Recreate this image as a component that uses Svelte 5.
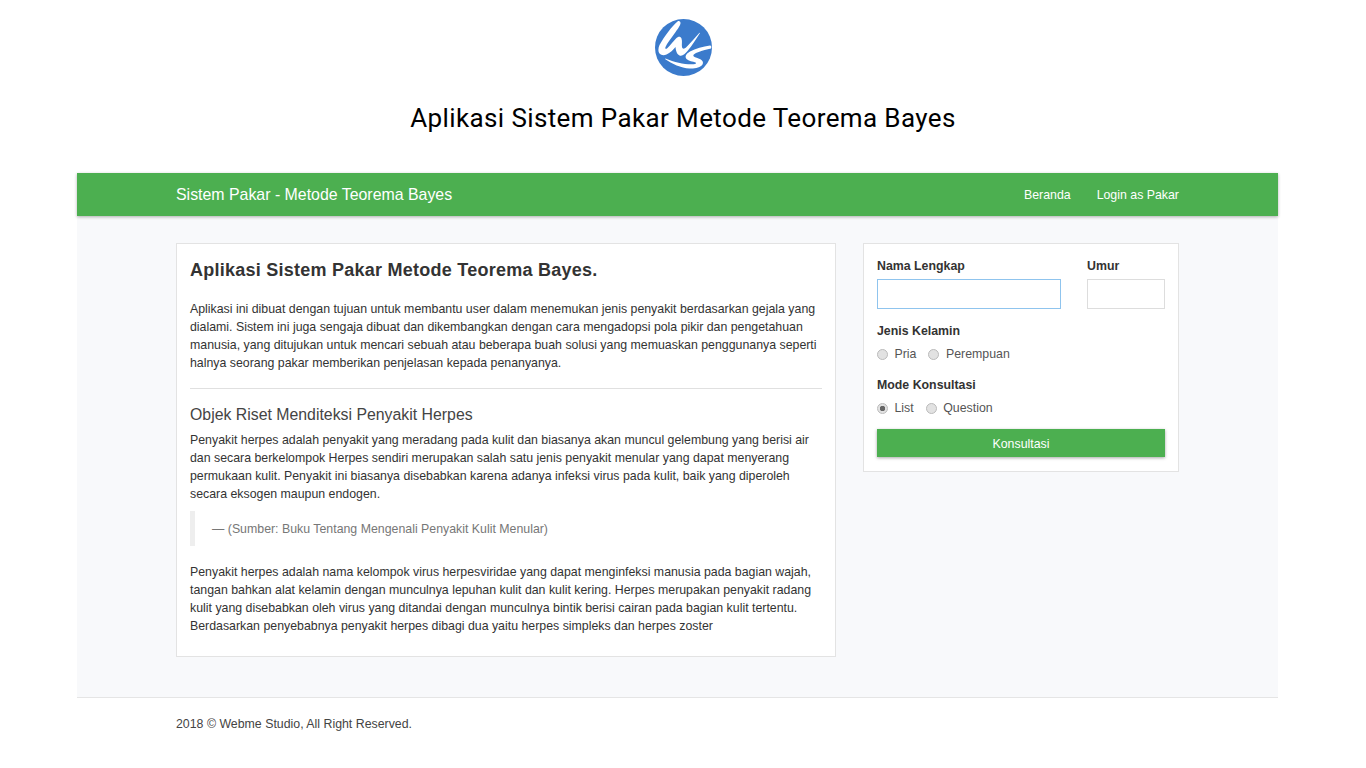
<script>
  let nama = $state('');
  let umur = $state('');
  let kelamin = $state('');
  let mode = $state('list');
</script>

<header class="brand">
  <svg class="logo" viewBox="0 0 57 57" aria-hidden="true">
    <circle cx="28.5" cy="28.5" r="28.5" fill="#3b7bcc" />
    <!-- W of the signature -->
    <path
      fill="#fff"
      d="M22.500 2.500C17 7 9 18 4.500 26C3 29.500 3 33 4.500 34.500C6.500 36.500 9 36.500 11.500 35.500C15 34 18.500 30.500 20.500 28C20.800 31 21.500 35 24.500 36.500C27.500 37.500 30 35 32.500 32C37.500 26 41.500 19.500 45 14L44.500 13.700C40 18.500 35.500 24 31.500 28C29.500 30 27.500 30.500 27 28C26.500 25.500 27.500 22.500 26.500 19.500C25.500 17 23 17.500 21 19.500C18 22.500 15 26.500 12.500 29C11 30.500 9.800 30 10.500 28C12 24 16 19.500 19.500 14.500C22 11 25 7 25.500 4.500C25.800 2.500 24 1.500 22.500 2.500Z"
    />
    <!-- S with its long tail -->
    <path
      fill="#fff"
      d="M55 26.500C48 27.500 40.500 29.500 35 32.500C31 34.800 29.500 37.500 31.500 40C33.500 42 38 42.500 40.500 43.500C41.800 44.300 41 45 38.500 45.200C31 45.800 20 43.500 10.500 39.500L10 40C17 45 26 49 34.500 49.500C40 49.800 45.500 48.500 47.500 45.500C49 43 47 40.500 43.500 39.500C41 38.500 38.500 38 38.300 36.800C38.200 35.500 40 34.500 43 33.300C47.500 31.500 52 30.500 56 29.500C56.800 28 56.300 26.500 55 26.500Z"
    />
  </svg>
  <h1>Aplikasi Sistem Pakar Metode Teorema Bayes</h1>
</header>

<div class="shell">
  <nav class="navbar">
    <div class="container navbar__inner">
      <a class="navbar__brand" href="#top">Sistem Pakar - Metode Teorema Bayes</a>
      <div class="navbar__links">
        <a href="#top">Beranda</a>
        <a href="#top">Login as Pakar</a>
      </div>
    </div>
  </nav>

  <main class="body">
    <div class="container columns">
      <article class="card article">
        <h2>Aplikasi Sistem Pakar Metode Teorema Bayes.</h2>
        <p>
          Aplikasi ini dibuat dengan tujuan untuk membantu user dalam menemukan jenis penyakit berdasarkan gejala yang
          dialami. Sistem ini juga sengaja dibuat dan dikembangkan dengan cara mengadopsi pola pikir dan pengetahuan
          manusia, yang ditujukan untuk mencari sebuah atau beberapa buah solusi yang memuaskan penggunanya seperti
          halnya seorang pakar memberikan penjelasan kepada penanyanya.
        </p>
        <hr />
        <h3>Objek Riset Menditeksi Penyakit Herpes</h3>
        <p>
          Penyakit herpes adalah penyakit yang meradang pada kulit dan biasanya akan muncul gelembung yang berisi air
          dan secara berkelompok Herpes sendiri merupakan salah satu jenis penyakit menular yang dapat menyerang
          permukaan kulit. Penyakit ini biasanya disebabkan karena adanya infeksi virus pada kulit, baik yang diperoleh
          secara eksogen maupun endogen.
        </p>
        <blockquote>— (Sumber: Buku Tentang Mengenali Penyakit Kulit Menular)</blockquote>
        <p>
          Penyakit herpes adalah nama kelompok virus herpesviridae yang dapat menginfeksi manusia pada bagian wajah,
          tangan bahkan alat kelamin dengan munculnya lepuhan kulit dan kulit kering. Herpes merupakan penyakit radang
          kulit yang disebabkan oleh virus yang ditandai dengan munculnya bintik berisi cairan pada bagian kulit tertentu.
          Berdasarkan penyebabnya penyakit herpes dibagi dua yaitu herpes simpleks dan herpes zoster
        </p>
      </article>

      <form class="card form" onsubmit={(e) => e.preventDefault()}>
        <div class="form__row">
          <label class="field field--name">
            <span class="label">Nama Lengkap</span>
            <input class="input input--focus" type="text" bind:value={nama} />
          </label>
          <label class="field field--age">
            <span class="label">Umur</span>
            <input class="input" type="text" bind:value={umur} />
          </label>
        </div>

        <div class="group">
          <span class="label">Jenis Kelamin</span>
          <div class="radios">
            <label><input type="radio" bind:group={kelamin} value="pria" />Pria</label>
            <label><input type="radio" bind:group={kelamin} value="perempuan" />Perempuan</label>
          </div>
        </div>

        <div class="group">
          <span class="label">Mode Konsultasi</span>
          <div class="radios">
            <label><input type="radio" bind:group={mode} value="list" />List</label>
            <label><input type="radio" bind:group={mode} value="question" />Question</label>
          </div>
        </div>

        <button type="submit">Konsultasi</button>
      </form>
    </div>
  </main>

  <footer class="footer">
    <div class="container">2018 © Webme Studio, All Right Reserved.</div>
  </footer>
</div>

<style>
  :global(body) {
    background: #fff;
    font-family: "Liberation Sans", Arial, sans-serif;
    font-size: 12.35px;
    line-height: 18px;
    color: #333;
  }

  .brand {
    display: flex;
    flex-direction: column;
    align-items: center;
    padding-top: 19px;
    height: 173px;
    box-sizing: border-box;
  }
  .logo {
    width: 57px;
    height: 57px;
    display: block;
  }
  .brand h1 {
    margin: 26px 0 0;
    font-family: Roboto, sans-serif;
    font-size: 26px;
    letter-spacing: 0.38px;
    line-height: 32px;
    font-weight: 400;
    color: #000;
  }

  .shell {
    width: 1201px;
    margin-left: 77px;
  }
  .container {
    width: 1003px;
    margin: 0 auto;
  }

  .navbar {
    height: 43px;
    background: #4caf50;
    box-shadow: 0 1px 3px rgba(0, 0, 0, 0.3);
    position: relative;
  }
  .navbar__inner {
    height: 100%;
    display: flex;
    align-items: center;
    justify-content: space-between;
  }
  .navbar a {
    color: #fff;
    text-decoration: none;
  }
  .navbar__brand {
    font-size: 15.9px;
  }
  .navbar__links {
    display: flex;
    gap: 26px;
  }

  .body {
    background: #f8f9fb;
    height: 482px;
    padding-top: 27px;
    box-sizing: border-box;
    border-bottom: 1px solid #e5e5e5;
  }
  .columns {
    display: flex;
    align-items: flex-start;
    justify-content: space-between;
  }
  .card {
    background: #fff;
    border: 1px solid #e3e3e3;
    box-sizing: border-box;
  }

  .article {
    width: 660px;
    height: 414px;
    padding: 14px 13px 0;
  }
  .article h2 {
    margin: 0 0 17px;
    font-size: 18px;
    line-height: 25px;
    font-weight: 700;
    letter-spacing: 0.25px;
    color: #333;
  }
  .article p {
    margin: 0;
  }
  .article hr {
    border: 0;
    border-top: 1px solid #e0e0e0;
    margin: 16px 0 16px;
  }
  .article h3 {
    margin: 0 0 6px;
    font-size: 15.85px;
    line-height: 20px;
    font-weight: 400;
    color: #444;
  }
  blockquote {
    margin: 8px 0 17px;
    height: 35px;
    line-height: 36px;
    padding-left: 17px;
    border-left: 5px solid #eee;
    color: #777;
  }

  .form {
    width: 316px;
    height: 228.500px;
    padding: 13px;
  }
  .form__row {
    display: flex;
    justify-content: space-between;
  }
  .field {
    display: flex;
    flex-direction: column;
  }
  .field--name {
    width: 184px;
  }
  .field--age {
    width: 78px;
  }
  .label {
    display: block;
    font-weight: 700;
    color: #333;
  }
  .field .label {
    margin-bottom: 4px;
  }
  .input {
    width: 100%;
    height: 30px;
    box-sizing: border-box;
    border: 1px solid #ddd;
    background: #fff;
    padding: 0 6px;
    outline: none;
    font: inherit;
  }
  .input--focus {
    border-color: #8fc4ee;
  }
  .group {
    margin-top: 13px;
  }
  .radios {
    display: flex;
    gap: 12px;
    margin-top: 5px;
    color: #555;
  }
  .radios label {
    display: flex;
    align-items: center;
  }
  .radios input {
    appearance: none;
    width: 11px;
    height: 11px;
    margin: 0 6.500px 0 0;
    border: 1px solid #bbb;
    border-radius: 50%;
    background: #e2e2e2;
    box-sizing: border-box;
  }
  .radios input:checked {
    background: radial-gradient(circle, #666 0 2.500px, #e2e2e2 3px);
  }
  button {
    display: block;
    width: 100%;
    height: 28px;
    margin-top: 12px;
    padding: 1px 0 0;
    border: 0;
    background: #4caf50;
    color: #fff;
    font: inherit;
    box-shadow: 0 1px 3px rgba(0, 0, 0, 0.35);
  }

  .footer {
    padding-top: 17px;
    color: #444;
  }
</style>
